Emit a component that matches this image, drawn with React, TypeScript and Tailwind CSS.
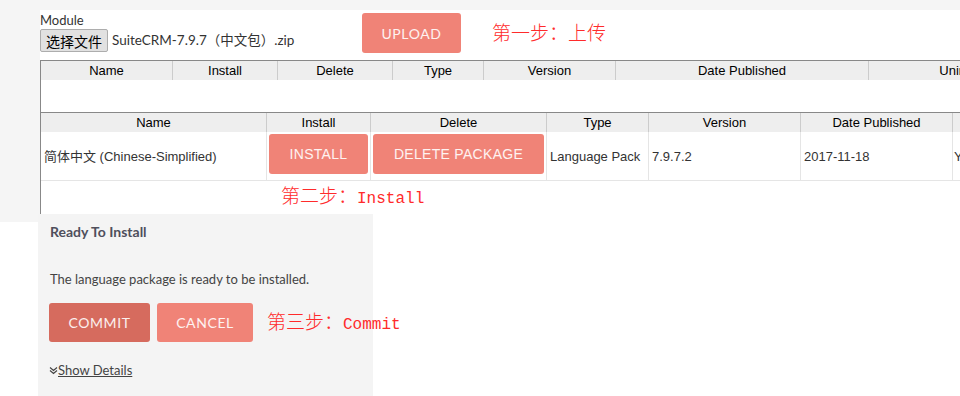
import React from "react";

const lato = "font-['Lato','Noto_Sans_CJK_SC',sans-serif]";
const arial = "font-['Liberation_Sans','Noto_Sans_CJK_SC',sans-serif]";

const head1 = [
  { label: "Name", w: "w-[132px]" },
  { label: "Install", w: "w-[105px]" },
  { label: "Delete", w: "w-[115px]" },
  { label: "Type", w: "w-[91px]" },
  { label: "Version", w: "w-[132px]" },
  { label: "Date Published", w: "w-[253px]" },
  { label: "Uninstallable", w: "w-[216px]" },
];

const head2 = [
  { label: "Name", w: "w-[226px]" },
  { label: "Install", w: "w-[104px]" },
  { label: "Delete", w: "w-[176px]" },
  { label: "Type", w: "w-[102px]" },
  { label: "Version", w: "w-[152px]" },
  { label: "Date Published", w: "w-[152px]" },
  { label: "Uninstallable", w: "w-[150px]" },
];

function Step({ cjk, latin }: { cjk: string; latin?: string }) {
  return (
    <span className="whitespace-nowrap text-[19px] leading-[22px] text-[#ff2b2b] font-light font-['Noto_Sans_CJK_SC',serif]">
      {cjk}
      {latin && (
        <span className="font-['Liberation_Mono',monospace] text-[16px] font-normal">
          {latin}
        </span>
      )}
    </span>
  );
}

function HeaderRow({ cols }: { cols: { label: string; w: string }[] }) {
  return (
    <div className="flex h-[20px] bg-[#eeeeee] border-t border-[#888888]">
      {cols.map((c) => (
        <div
          key={c.label}
          className={`${c.w} shrink-0 border-r border-[#cccccc] text-center text-[13px] leading-[19px] text-black overflow-hidden whitespace-nowrap ${arial}`}
        >
          {c.label}
        </div>
      ))}
    </div>
  );
}

export default function App() {
  return (
    <div className={`w-[960px] h-[396px] bg-white overflow-hidden ${lato}`}>
      <div className="h-[10px] bg-[#f5f5f5]" />

      <div className="flex h-[204px]">
        <div className="w-[40px] shrink-0 bg-[#f5f5f5]" />
        <div className="flex-1 min-w-0 overflow-hidden">
          {/* Upload row */}
          <div className="flex h-[50px] items-start">
            <div className="w-[322px] shrink-0 pt-[1px]">
              <div className="text-[13px] leading-[18px] text-[#333]">Module</div>
              <div className="flex items-center h-[23px]">
                <button className="h-[23px] w-[68px] shrink-0 rounded-[2px] border border-[#adadad] bg-[#e1e1e1] text-[14px] leading-[20px] text-black font-['Noto_Sans_CJK_SC',sans-serif]">
                  选择文件
                </button>
                <span className="ml-[4px] text-[13.5px] text-[#333] whitespace-nowrap">
                  SuiteCRM-7.9.7（中文包）.zip
                </span>
              </div>
            </div>
            <button className="mt-[3px] h-[40px] w-[99px] shrink-0 rounded-[3px] bg-[#f08377] text-[14px] tracking-[0.6px] text-white/90">
              UPLOAD
            </button>
            <div className="ml-[31px] mt-[11px] shrink-0">
              <Step cjk="第一步：上传" />
            </div>
          </div>

          {/* Tables */}
          <div className="h-[154px] border-l border-[#888888] w-[1100px]">
            <HeaderRow cols={head1} />
            <div className="h-[32px]" />
            <HeaderRow cols={head2} />
            <div className={`flex h-[49px] border-b border-[#e5e5e5] text-[13px] text-[#333] ${arial}`}>
              <div className="w-[226px] shrink-0 border-r border-[#e5e5e5] flex items-center pl-[3px] pt-[2px]">
                简体中文 (Chinese-Simplified)
              </div>
              <div className="w-[104px] shrink-0 border-r border-[#e5e5e5] px-[2px] pt-[2px]">
                <button className="h-[40px] w-full rounded-[3px] bg-[#f08377] text-[14px] tracking-[0.3px] text-white/90">
                  INSTALL
                </button>
              </div>
              <div className="w-[176px] shrink-0 border-r border-[#e5e5e5] px-[2px] pt-[2px]">
                <button className="h-[40px] w-full rounded-[3px] bg-[#f08377] text-[14px] tracking-[0.3px] text-white/90">
                  DELETE PACKAGE
                </button>
              </div>
              <div className="w-[102px] shrink-0 border-r border-[#e5e5e5] flex items-center pl-[3px] pt-[2px]">
                Language Pack
              </div>
              <div className="w-[152px] shrink-0 border-r border-[#e5e5e5] flex items-center pl-[3px] pt-[2px]">
                7.9.7.2
              </div>
              <div className="w-[152px] shrink-0 border-r border-[#e5e5e5] flex items-center pl-[3px] pt-[2px]">
                2017-11-18
              </div>
              <div className="w-[150px] shrink-0 flex items-center pl-[1px] pt-[2px]">Yes</div>
            </div>
            <div className="pl-[240px] pt-[3px]">
              <Step cjk="第二步：" latin="Install" />
            </div>
          </div>
        </div>
      </div>

      {/* Ready to install panel */}
      <div className="flex">
        <div className="w-[38px] h-[8px] shrink-0 bg-[#f5f5f5]" />
        <div className="w-[335px] h-[182px] shrink-0 bg-[#f4f4f4] pl-[11px] pt-[8px]">
          <div className="text-[14px] leading-[20px] font-bold text-[#4f4f5c] pl-[1px]">
            Ready To Install
          </div>
          <div className="mt-[29px] pl-[1px] text-[13px] leading-[17px] text-[#444]">
            The language package is ready to be installed.
          </div>
          <div className="mt-[15px] flex items-center">
            <button className="h-[39px] w-[101px] shrink-0 rounded-[3px] bg-[#d66b5e] text-[14px] tracking-[0.6px] text-white/90">
              COMMIT
            </button>
            <button className="ml-[7px] h-[39px] w-[96px] shrink-0 rounded-[3px] bg-[#f08377] text-[14px] tracking-[0.6px] text-white/90">
              CANCEL
            </button>
            <div className="ml-[14px] shrink-0">
              <Step cjk="第三步：" latin="Commit" />
            </div>
          </div>
          <div className="mt-[20px] flex items-center text-[13px] leading-[17px] text-[#444]">
            <svg width="9" height="9" viewBox="0 0 9 9">
              <path d="M1 1.5 L4.5 4.5 L8 1.5 M1 4.5 L4.5 7.5 L8 4.5" fill="none" stroke="#444" strokeWidth="1.2" />
            </svg>
            <span className="underline">Show Details</span>
          </div>
        </div>
      </div>
    </div>
  );
}
